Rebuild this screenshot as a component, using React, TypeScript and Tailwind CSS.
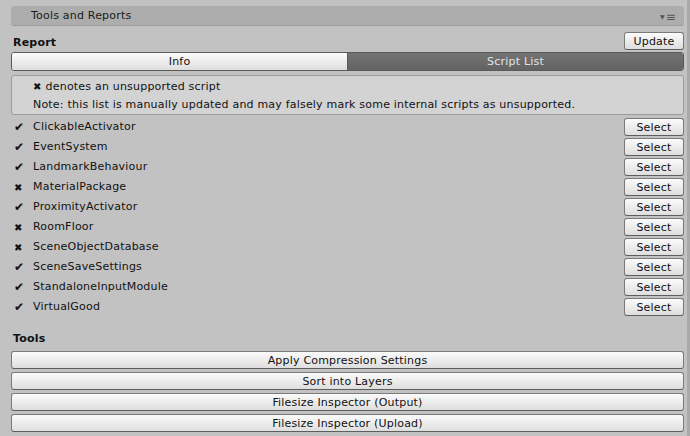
const scripts: { name: string; ok: boolean }[] = [
  { name: "ClickableActivator", ok: true },
  { name: "EventSystem", ok: true },
  { name: "LandmarkBehaviour", ok: true },
  { name: "MaterialPackage", ok: false },
  { name: "ProximityActivator", ok: true },
  { name: "RoomFloor", ok: false },
  { name: "SceneObjectDatabase", ok: false },
  { name: "SceneSaveSettings", ok: true },
  { name: "StandaloneInputModule", ok: true },
  { name: "VirtualGood", ok: true },
];

const tools = [
  "Apply Compression Settings",
  "Sort into Layers",
  "Filesize Inspector (Output)",
  "Filesize Inspector (Upload)",
];

function UnityButton({ children, className = "" }: { children: React.ReactNode; className?: string }) {
  return (
    <button
      type="button"
      className={`flex items-center justify-center rounded-[3px] border border-[#7a7a7a] border-b-[#5e5e5e] bg-gradient-to-b from-[#fbfbfb] to-[#dedede] pt-[1px] text-[11px] leading-none tracking-[0.2px] text-[#111] ${className}`}
    >
      {children}
    </button>
  );
}

export default function App() {
  return (
    <div
      className="flex h-[436px] w-[690px] flex-col border-r-[3px] border-[#a9a9a9] bg-[#c2c2c2] pl-[11px] pr-[3px] pt-[6px] text-[11px] tracking-[0.2px] text-[#111]"
      style={{ fontFamily: '"DejaVu Sans", Verdana, sans-serif' }}
    >
      <div className="flex h-[20px] items-center justify-between rounded-[3px] border-b border-[#9a9a9a] bg-[#adadad] pl-[20px] pr-[8px] pt-[2px] text-[#1a1a1a]">
        <span>Tools and Reports</span>
        <span className="flex items-center gap-[1px] text-[#555]">
          <span className="text-[6px]">▼</span>
          <span className="text-[12px] leading-none">≡</span>
        </span>
      </div>

      <div className="mt-[6px] flex items-center justify-between">
        <span className="pl-[2px] pt-[2px] font-bold leading-none">Report</span>
        <UnityButton className="h-[18px] w-[60px]">Update</UnityButton>
      </div>

      <div className="mt-[2px] flex h-[19px] overflow-hidden rounded-[3px] border border-[#5a5a5a]">
        <div className="flex flex-1 items-center justify-center border-r border-[#5a5a5a] bg-gradient-to-b from-[#fbfbfb] to-[#dedede] pt-[1px]">
          Info
        </div>
        <div className="flex flex-1 items-center justify-center bg-gradient-to-b from-[#737373] to-[#636363] pt-[1px] text-[#e4e4e4]">
          Script List
        </div>
      </div>

      <div className="mt-[4px] flex h-[40px] flex-col justify-center gap-[2px] rounded-[3px] border border-[#9c9c9c] bg-[#d3d3d3] pl-[21px] pt-[2px]">
        <div className="flex items-center gap-[4px]">
          <span className="text-[10px]">✖</span>
          <span>denotes an unsupported script</span>
        </div>
        <div>Note: this list is manually updated and may falsely mark some internal scripts as unsupported.</div>
      </div>

      <div className="mt-[2px] flex flex-col">
        {scripts.map((s) => (
          <div key={s.name} className="flex h-[20px] items-center justify-between">
            <div className="flex items-center">
              <span className={`w-[22px] pl-[3px] ${s.ok ? "text-[12px]" : "text-[10px]"}`}>{s.ok ? "✔" : "✖"}</span>
              <span>{s.name}</span>
            </div>
            <UnityButton className="h-[18px] w-[60px]">Select</UnityButton>
          </div>
        ))}
      </div>

      <div className="mt-[14px] pl-[2px] font-bold">Tools</div>
      <div className="mt-[3px] flex flex-col gap-[3px]">
        {tools.map((t) => (
          <UnityButton key={t} className="h-[18px] w-full">
            {t}
          </UnityButton>
        ))}
      </div>
    </div>
  );
}
